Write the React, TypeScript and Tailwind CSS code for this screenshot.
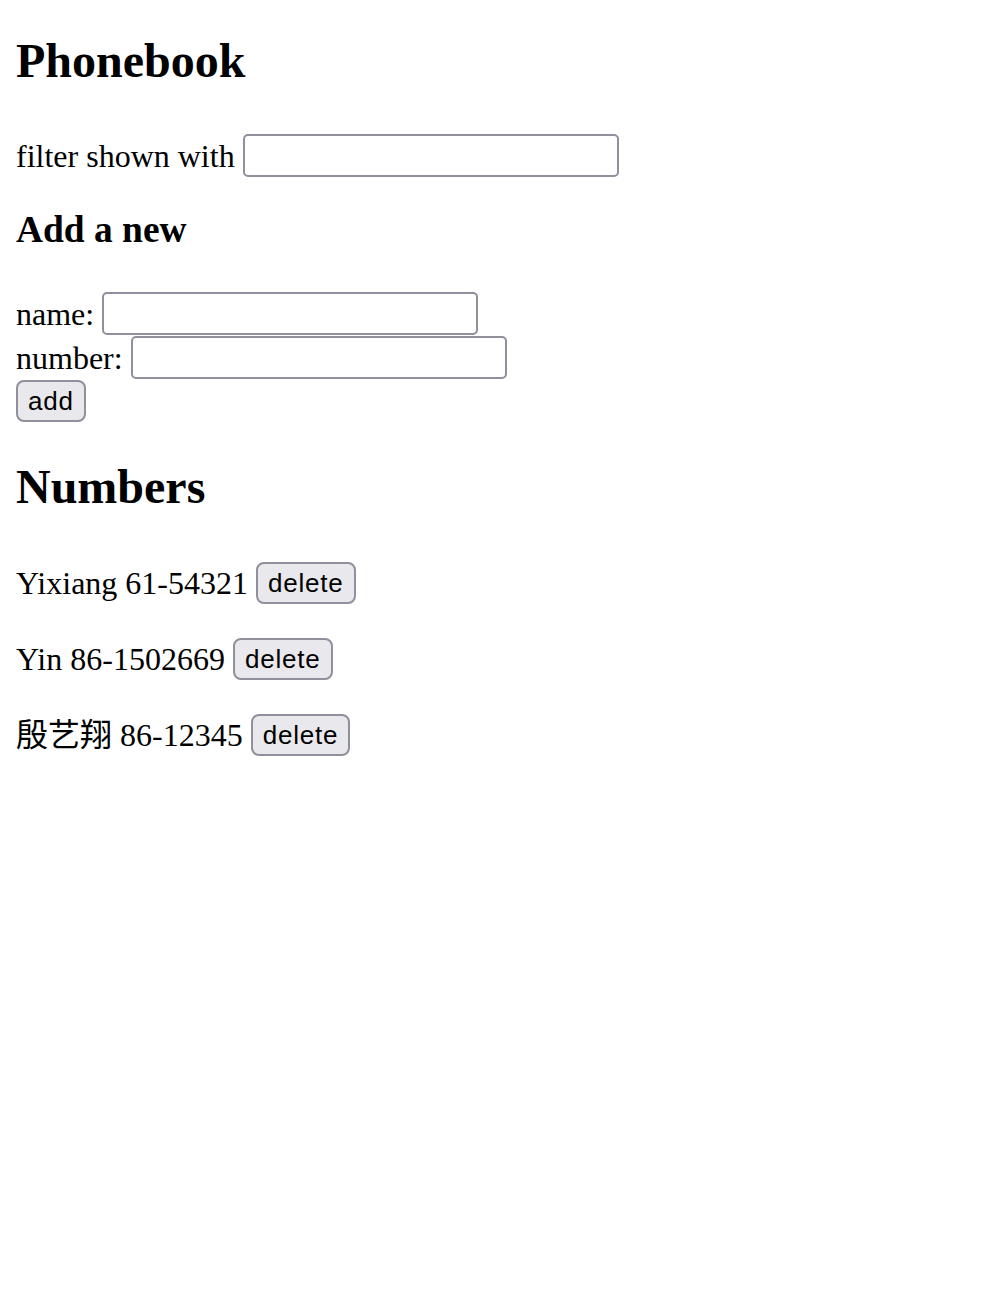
import { useState } from 'react';

const serif = "font-['Liberation_Serif','Noto_Sans_CJK_SC',serif]";

const btn =
    "font-['Liberation_Sans',sans-serif] text-[26px] leading-[32px] tracking-[0.8px] text-black bg-[#e9e9ed] border-2 border-[#8f8f9d] rounded-[8px] px-[10px] py-[3px]";

const input = 'w-[376px] h-[43px] border-2 border-[#8f8f9d] rounded-[5px] bg-white px-1 outline-none';

const initial = [
    { name: 'Yixiang', number: '61-54321' },
    { name: 'Yin', number: '86-1502669' },
    { name: '殷艺翔', number: '86-12345' },
];

export default function App() {
    const [persons] = useState(initial);
    const [filter, setFilter] = useState('');
    const [newName, setNewName] = useState('');
    const [newNumber, setNewNumber] = useState('');

    return (
        <div className={`${serif} text-[32px] text-black px-4 pb-4`}>
            <h2 className="text-[48px] leading-[55px] font-bold mt-[33px] mb-[46px]">Phonebook</h2>

            <div className="flex items-start gap-2 h-[44px]">
                <span className="leading-[44px]">filter shown with</span>
                <input className={input} value={filter} onChange={(e) => setFilter(e.target.value)} />
            </div>

            <h3 className="text-[37.44px] leading-[43px] font-bold mt-[30px] mb-[41px]">Add a new</h3>

            <form onSubmit={(e) => e.preventDefault()}>
                <div className="flex items-start gap-2 h-[44px]">
                    <span className="leading-[44px]">name:</span>
                    <input className={input} value={newName} onChange={(e) => setNewName(e.target.value)} />
                </div>
                <div className="flex items-start gap-2 h-[44px]">
                    <span className="leading-[44px]">number:</span>
                    <input className={input} value={newNumber} onChange={(e) => setNewNumber(e.target.value)} />
                </div>
                <div className="flex h-[42px]">
                    <button type="submit" className={btn}>add</button>
                </div>
            </form>

            <h2 className="text-[48px] leading-[55px] font-bold mt-[37px] mb-[47px]">Numbers</h2>

            {persons.map((p) => (
                <div key={p.name} className="flex items-center gap-2 h-[44px] my-[32px]">
                    <span className="leading-[44px]">{p.name} {p.number}</span>
                    <button className={btn}>delete</button>
                </div>
            ))}
        </div>
    );
}
